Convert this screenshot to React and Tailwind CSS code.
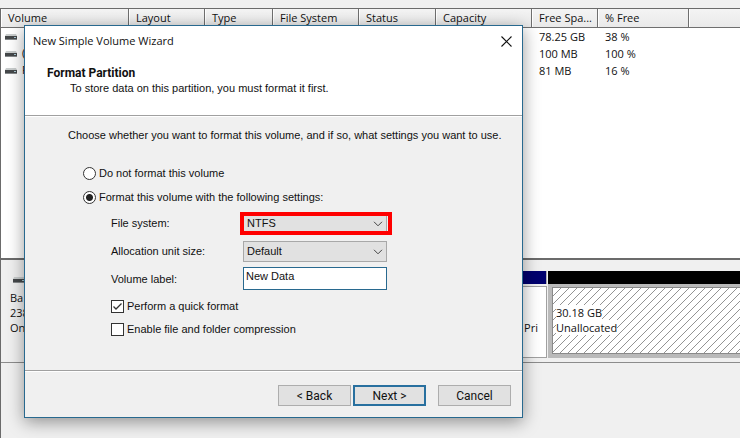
import { useState } from 'react';

const columns = [
  { label: "Volume", width: "w-[128px]" },
  { label: "Layout", width: "w-[76px]" },
  { label: "Type", width: "w-[68px]" },
  { label: "File System", width: "w-[86px]" },
  { label: "Status", width: "w-[77px]" },
  { label: "Capacity", width: "w-[96px]" },
  { label: "Free Spa...", width: "w-[66px]" },
  { label: "% Free", width: "w-[91px]" },
];

const volumes = [
  { name: "", free: "78.25 GB", percent: "38 %" },
  { name: "(", free: "100 MB", percent: "100 %" },
  { name: "F", free: "81 MB", percent: "16 %" },
];

function DriveIcon() {
  return (
    <svg className="h-2 w-3 shrink-0" viewBox="0 0 12 8" aria-hidden="true">
      <path d="M1 1h10l1 2H0z" fill="#c9cdcd" />
      <rect y="3" width="12" height="4" fill="#45484a" />
      <rect y="6" width="12" height="1" fill="#85898b" />
      <rect x="9" y="4" width="2" height="1" fill="#a9c9d4" />
    </svg>
  );
}

function VolumeTable() {
  return (
    <div className="h-[249px] bg-white">
      <table className="w-full table-fixed border-separate border-spacing-0 text-left">
        <thead>
          <tr className="h-[19px] bg-linear-to-b from-[#f4f4f4] to-[#e9e9e9]">
            {columns.map((col) => (
              <th
                key={col.label}
                className={`${col.width} h-[19px] truncate border-r border-b border-[#6f6f6f] p-0 pl-[7px] font-normal leading-[18px] shadow-[inset_1px_0_0_#fff]`}
              >
                {col.label}
              </th>
            ))}
            <th className="border-b border-[#6f6f6f] p-0 shadow-[inset_1px_0_0_#fff]" />
          </tr>
        </thead>
        <tbody>
          {volumes.map((volume) => (
            <tr key={volume.free} className="h-[17px]">
              <td className="p-0 pl-1">
                <div className="flex h-[17px] items-center gap-[5px]">
                  <DriveIcon />
                  <span>{volume.name}</span>
                </div>
              </td>
              <td colSpan={5} />
              <td className="p-0 pl-[7px] leading-[17px]">{volume.free}</td>
              <td className="p-0 pl-[7px] leading-[17px]">{volume.percent}</td>
              <td />
            </tr>
          ))}
        </tbody>
      </table>
    </div>
  );
}

function DiskRow() {
  return (
    <div className="flex h-[105px] border-t-2 border-b border-t-[#6b6b6b] border-b-[#8c8c8c]">
      <div className="w-[84px] pl-[9px] pt-4 leading-[15px]">
        <div className="mb-1.5 pl-[3px]">
          <DriveIcon />
        </div>
        <p>Ba</p>
        <p>238</p>
        <p>On</p>
      </div>
      <div className="flex w-[462px] flex-col pt-[11px] pb-1">
        <div className="h-[13px] border-r border-[#b0b0b0] bg-[#00006e]" />
        <div className="mt-0.5 flex flex-1 items-center justify-end border border-[#a0a0a0] bg-white pt-3 pr-2">
          Pri
        </div>
      </div>
      <div className="flex flex-1 flex-col pt-[11px] pb-1 pl-px">
        <div className="h-[13px] bg-black" />
        <div className="flex-1 border-4 border-t-[3px] border-r-0 border-[#bababa]">
          <div className="relative h-full border border-r-0 border-[#8a8a8a] bg-white pt-[17px] pl-[3px] leading-[15px]">
            <svg className="absolute inset-0 h-full w-full" aria-hidden="true">
              <pattern id="hatch" width="8" height="8" patternUnits="userSpaceOnUse">
                <path d="M-1 9L9-1M-1 1L1-1M7 9L9 7" stroke="#777" strokeWidth="0.8" />
              </pattern>
              <rect width="100%" height="100%" fill="url(#hatch)" />
            </svg>
            <p className="relative"><span className="bg-white">30.18 GB</span></p>
            <p className="relative"><span className="bg-white">Unallocated</span></p>
          </div>
        </div>
      </div>
    </div>
  );
}

function SelectBox({ id, options, highlighted }) {
  return (
    <div className="relative h-[21px] w-36">
      <select
        id={id}
        className="h-full w-full appearance-none border border-[#a8a8a8] bg-[#e1e1e1] pl-[3px] outline-none"
      >
        {options.map((option) => (
          <option key={option}>{option}</option>
        ))}
      </select>
      <svg
        className="pointer-events-none absolute top-2 right-1 h-[6px] w-[10px]"
        viewBox="0 0 10 6"
        fill="none"
        stroke="#444"
      >
        <path d="M1 .8l4 4 4-4" />
      </svg>
      {highlighted && (
        <span className="pointer-events-none absolute -top-px -right-[5px] -bottom-px -left-[3px] border-4 border-[#f00]" />
      )}
    </div>
  );
}

function Radio({ label, checked, onChange }) {
  return (
    <label className="flex h-[13px] items-center gap-[3px]">
      <input
        type="radio"
        name="format"
        checked={checked}
        onChange={onChange}
        className="size-[13px] appearance-none rounded-full border border-[#333] bg-white checked:bg-[radial-gradient(circle,#222_3px,#fff_4px)]"
      />
      {label}
    </label>
  );
}

function Checkbox({ label, checked, onChange }) {
  return (
    <label className="flex h-[13px] items-center gap-[3px]">
      <span className="relative size-[13px]">
        <input
          type="checkbox"
          checked={checked}
          onChange={onChange}
          className="block size-[13px] appearance-none border border-[#333] bg-white"
        />
        {checked && (
          <svg
            className="pointer-events-none absolute inset-0 size-[13px]"
            viewBox="0 0 13 13"
            fill="none"
            stroke="#333"
            strokeWidth="1.3"
          >
            <path d="M2.5 6.5L5 9l5.5-5.5" />
          </svg>
        )}
      </span>
      {label}
    </label>
  );
}

function WizardDialog() {
  const [format, setFormat] = useState(true);
  const [quick, setQuick] = useState(true);
  const [compress, setCompress] = useState(false);

  return (
    <div
      role="dialog"
      aria-label="New Simple Volume Wizard"
      className="absolute top-[25px] left-6 w-[499px] border border-[#28698f] bg-[#f0f0f0] font-['Liberation_Sans',sans-serif] text-[11px] text-[#111] shadow-[0_4px_16px_rgba(0,0,0,0.4)]"
    >
      <div className="h-[90px] border-b border-[#a0a0a0] bg-white shadow-[0_1px_0_#fff]">
        <div className="flex h-[30px] items-center justify-between pr-[10px] pl-2 font-['Open_Sans',sans-serif] text-[11px]">
          <h1>New Simple Volume Wizard</h1>
          <button aria-label="Close">
            <svg className="size-[11px]" viewBox="0 0 11 11" stroke="#111" strokeWidth="1.1">
              <path d="M.5 .5l10 10M10.500 .5l-10 10" />
            </svg>
          </button>
        </div>
        <h2 className="mt-[10px] pl-[22px] font-['Roboto',sans-serif] text-[12px] leading-[15px] font-bold">Format Partition</h2>
        <p className="pl-[45px] leading-[15px]">To store data on this partition, you must format it first.</p>
      </div>

      <div className="h-[254px] pt-3 pl-[43px]">
        <p className="leading-[15px]">
          Choose whether you want to format this volume, and if so, what settings you want to use.
        </p>
        <div className="mt-6 flex flex-col gap-[11px] pl-[15px]">
          <Radio label="Do not format this volume" checked={!format} onChange={() => setFormat(false)} />
          <Radio label="Format this volume with the following settings:" checked={format} onChange={() => setFormat(true)} />
        </div>
        <div className="mt-[9px] grid grid-cols-[132px_144px] items-center gap-y-[7px] pl-[43px]">
          <label htmlFor="fs">File system:</label>
          <SelectBox id="fs" options={["NTFS", "FAT32", "exFAT"]} highlighted />
          <label htmlFor="unit">Allocation unit size:</label>
          <SelectBox id="unit" options={["Default", "4096", "8192"]} />
          <label htmlFor="label">Volume label:</label>
          <div className="-mt-0.5 flex h-[23px] border border-[#28698f] bg-white">
            <input id="label" defaultValue="New Data" autoFocus className="w-full pb-1 pl-0.5 outline-none" />
          </div>
        </div>
        <div className="mt-[10px] flex flex-col gap-[10px] pl-[43px]">
          <Checkbox label="Perform a quick format" checked={quick} onChange={() => setQuick(!quick)} />
          <Checkbox label="Enable file and folder compression" checked={compress} onChange={() => setCompress(!compress)} />
        </div>
      </div>

      <div className="flex h-[47px] justify-end border-t border-[#a0a0a0] pt-[14px] pr-[11px] font-['Roboto',sans-serif] text-[12px] shadow-[inset_0_1px_0_#fff]">
        <button className="h-[21px] w-[73px] border border-[#adadad] bg-[#e1e1e1]">&lt; Back</button>
        <button className="ml-0.5 h-[21px] w-[73px] border-2 border-[#28709f] bg-[#e1e1e1]">Next &gt;</button>
        <button className="ml-3 h-[21px] w-[73px] border border-[#adadad] bg-[#e1e1e1]">Cancel</button>
      </div>
    </div>
  );
}

export default function App() {
  return (
    <main className="relative min-h-screen overflow-hidden bg-[#f0f0f0] pt-2 font-['Open_Sans',sans-serif] text-[11px] text-[#111]">
      <div className="min-h-[430px] border-t border-l border-[#6b6b6b]">
        <VolumeTable />
        <DiskRow />
      </div>
      <WizardDialog />
    </main>
  );
}
